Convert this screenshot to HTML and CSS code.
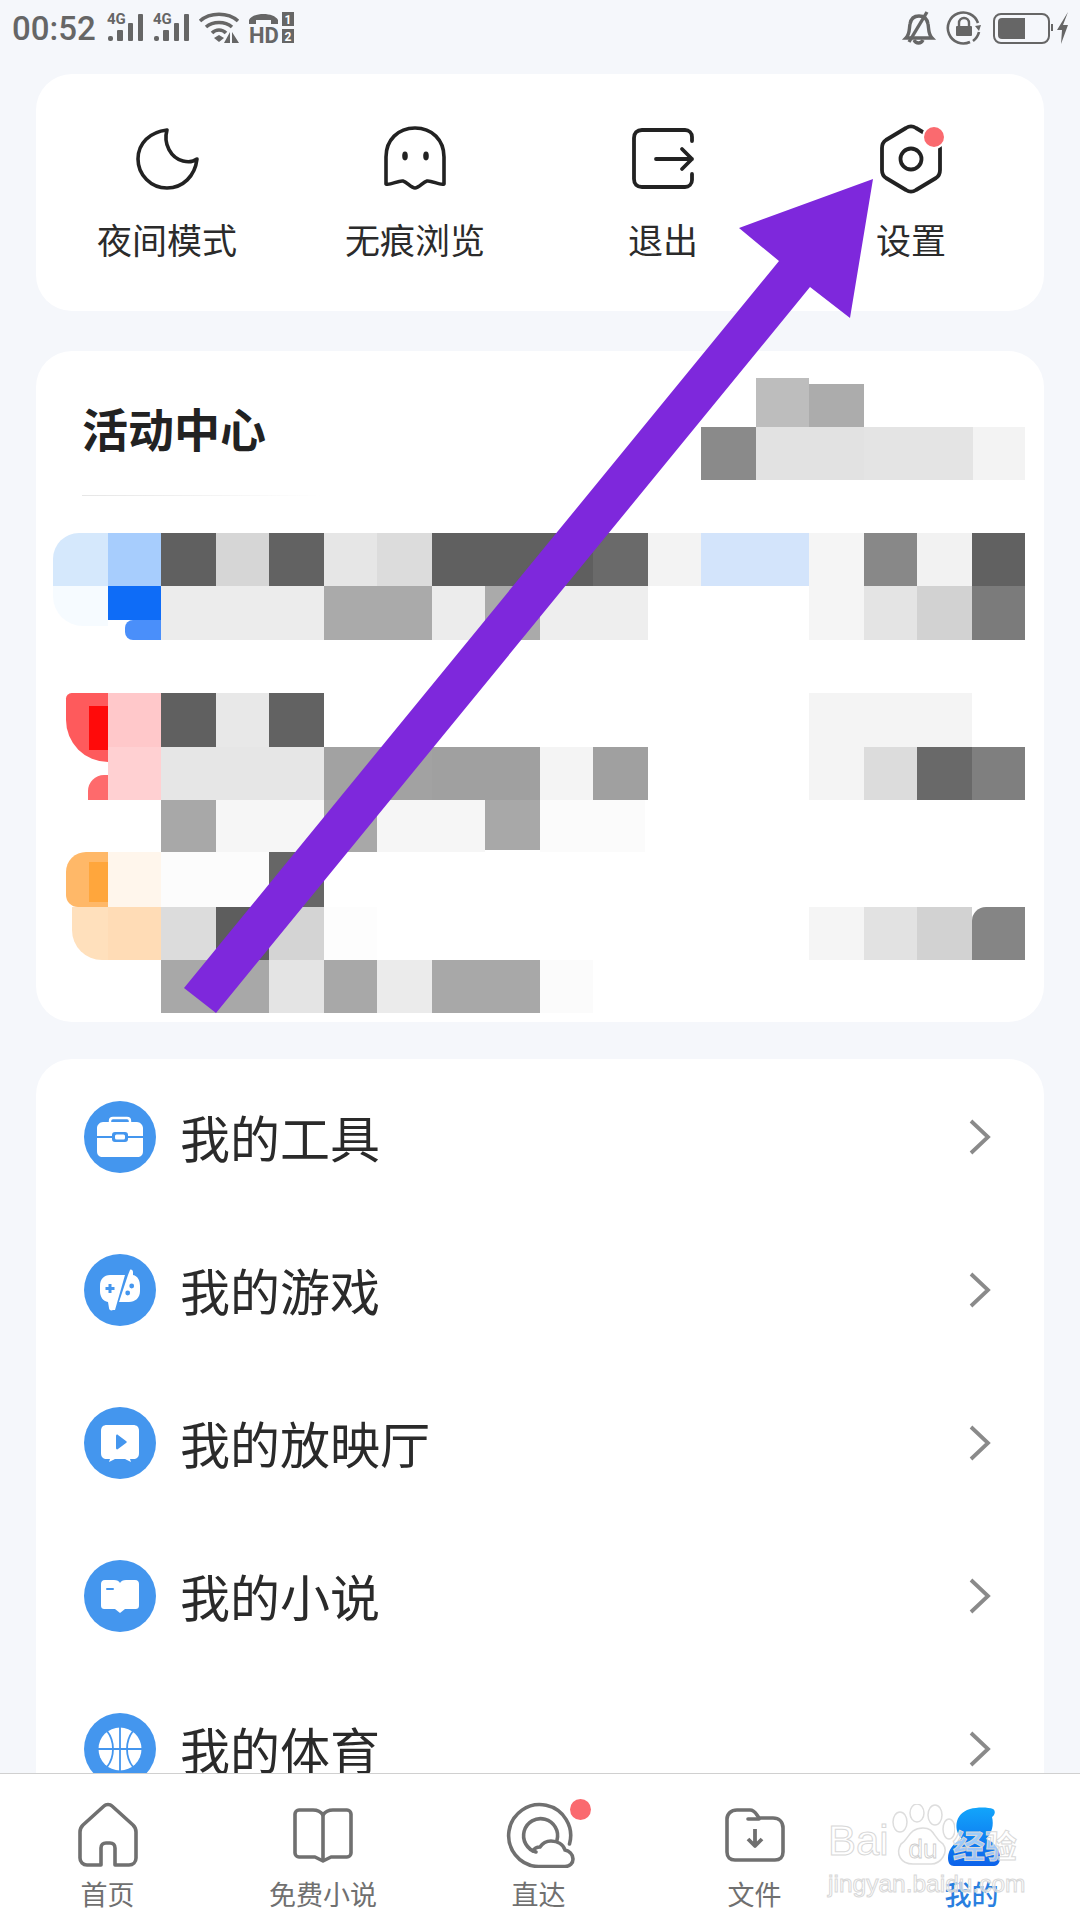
FILE: index.html
```html
<!DOCTYPE html>
<html lang="zh-CN">
<head>
    <meta charset="UTF-8">
    <meta name="viewport" content="width=device-width, initial-scale=1.0">
    <title>我的</title>
    <link rel="stylesheet" href="styles.css">
</head>
<body>
    <div class="screen">
        <!-- status bar -->
        <div class="status">
            <div class="status-left">
                <span class="time">00:52</span>
                <svg width="37" height="30" viewBox="0 0 37 30"><text x="0" y="11" class="sig-label">4G</text><g fill="#666"><rect x="1" y="23" width="5" height="5" rx="2"/><rect x="10" y="17" width="6" height="11" rx="1"/><rect x="21" y="10" width="5" height="18" rx="1"/><rect x="31" y="1" width="5" height="27" rx="1"/></g></svg>
                <svg width="37" height="30" viewBox="0 0 37 30"><text x="0" y="11" class="sig-label">4G</text><g fill="#666"><rect x="1" y="23" width="5" height="5" rx="2"/><rect x="10" y="17" width="6" height="11" rx="1"/><rect x="21" y="10" width="5" height="18" rx="1"/><rect x="31" y="1" width="5" height="27" rx="1"/></g></svg>
                <svg width="43" height="32" viewBox="0 0 43 32" fill="none" stroke="#666" stroke-width="3.6"><path d="M1 9C11 0 29 0 39 9"/><path d="M7 15C14 9 26 9 33 15"/><path d="M13 21C17 17 23 17 27 21"/><path d="M15 26l5-3 5 3-5 4z" fill="#666" stroke="none"/><path d="M31 20v11h-6zM33 20v11h7z" fill="#666" stroke="none"/></svg>
                <svg class="hd" width="46" height="32" viewBox="0 0 46 32"><path d="M0 12V8C4 0 25 0 29 8v4h-7V8H7v4z" fill="#666"/><text x="0" y="31" class="hd-label">HD</text><rect x="33" y="0" width="12" height="14" fill="#666"/><rect x="33" y="17" width="12" height="14" fill="#666"/><text x="39" y="11.5" class="sim-label">1</text><text x="39" y="28.5" class="sim-label">2</text></svg>
            </div>
            <div class="status-right">
                <svg width="32" height="34" viewBox="0 0 32 34" fill="none" stroke="#666" stroke-width="3.4"><path d="M3 27c4-4 3-9 4-14 1-6 5-8 9-8s8 2 9 8c1 5 0 10 4 14z"/><path d="M11 29c2 4 7 4 9 0"/><path d="M6 31L24 1"/></svg>
                <svg width="34" height="34" viewBox="0 0 34 34" fill="none" stroke="#666" stroke-width="2.6"><path d="M31 12A15.5 15.5 0 1 0 23 31"/><path d="M32 21a16 16 0 0 1-6 9"/><path d="M28 15l4 5 2-6z" fill="#666" stroke="none"/><path d="M12 15v-3a5 5 0 0 1 10 0v3" stroke-width="2.4"/><rect x="9" y="15" width="16" height="10" rx="1" fill="#666" stroke="none"/></svg>
                <div class="battery"><div class="battery-fill"></div></div>
                <svg width="17" height="32" viewBox="0 0 17 32"><rect x="0" y="12" width="2" height="7" fill="#666"/><path d="M17 0L6 18h5l-1 14 7-19h-5z" fill="#666"/></svg>
            </div>
        </div>

        <!-- quick actions -->
        <div class="card quick">
            <div class="quick-item">
                <svg width="64" height="64" viewBox="0 0 64 64" fill="none" stroke="#222" stroke-width="3.6" stroke-linejoin="round"><path d="M32 4C15 6 3 17 3 33c0 16 13 29 29 29 16 0 28-12 30-29-4 3-10 3-14 2C36 32 28 18 32 4z"/></svg>
                <span>夜间模式</span>
            </div>
            <div class="quick-item">
                <svg width="64" height="64" viewBox="0 0 64 64" fill="none" stroke="#222" stroke-width="3.6" stroke-linejoin="round"><path d="M3 58V31C3 14 15 2 32 2s29 12 29 29v27c-3 2-13-4-17-3-4 1-8 7-12 7s-8-6-12-7c-4-1-14 5-17 3z"/><ellipse cx="22" cy="30" rx="2.8" ry="4.4" fill="#222" stroke="none"/><ellipse cx="43" cy="30" rx="2.8" ry="4.4" fill="#222" stroke="none"/></svg>
                <span>无痕浏览</span>
            </div>
            <div class="quick-item">
                <svg width="64" height="64" viewBox="0 0 64 64" fill="none" stroke="#222" stroke-width="3.8" stroke-linecap="round" stroke-linejoin="round"><path d="M61 15V11C61 7 58 4 54 4H11C6 4 3 7 3 12v41c0 5 3 8 8 8h43c4 0 7-3 7-7v-6"/><path d="M25 33h36M51 23l10 10-10 10"/></svg>
                <span>退出</span>
            </div>
            <div class="quick-item">
                <svg class="gear" width="64" height="70" viewBox="0 0 64 70" fill="none" stroke="#222" stroke-width="3.8" stroke-linejoin="round"><path d="M27 4C30 2 34 2 37 4l20 12c3 2 4 4 4 8v22c0 4-1 6-4 8L37 66c-3 2-7 2-10 0L7 54c-3-2-4-4-4-8V24c0-4 1-6 4-8z"/><circle cx="32" cy="35" r="10.5"/></svg>
                <i class="dot gear-dot"></i>
                <span>设置</span>
            </div>
        </div>

        <!-- activity center, the source is mosaicked here -->
        <div class="card activity">
            <h2>活动中心</h2>
            <div class="hairline"></div>
            <div class="mosaic" id="mosaic"></div>
        </div>

        <!-- list -->
        <div class="card list">
            <div class="row">
                <span class="round"><svg width="46" height="46" viewBox="0 0 46 46"><path d="M13 9V7c0-2 1-3 3-3h14c2 0 3 1 3 3v2" fill="none" stroke="#fff" stroke-width="2.4"/><path d="M6 8h34c3 0 6 3 6 6v8H31v-1c0-2-1-3-3-3H18c-2 0-3 1-3 3v1H0v-8c0-3 3-6 6-6zM0 24h15v1c0 2 1 3 3 3h10c2 0 3-1 3-3v-1h15v13c0 4-2 6-6 6H6c-4 0-6-2-6-6z" fill="#fff"/><rect x="18" y="20.5" width="10" height="5" rx="1.5" fill="#fff"/></svg></span>
                <span class="row-text">我的工具</span>
                <svg class="chev" width="24" height="36" viewBox="0 0 24 36" fill="none" stroke="#8a8a8a" stroke-width="3.8"><path d="M3 2l17 16L3 34"/></svg>
            </div>
            <div class="row">
                <span class="round"><svg width="46" height="46" viewBox="0 0 46 46"><path d="M28 8H13C7 8 3 12 3 19v5c0 6 3 10 8 11l1 6c0 2 2 3 4 2h2z" fill="#fff"/><path d="M31 8l2-5c1-1 3 0 3 2v3c5 1 7 6 7 11v5c0 7-5 11-11 11H22z" fill="#fff"/><path d="M11.5 17v3h-3v3h3v3h3v-3h3v-3h-3v-3z" fill="#4496ee"/><circle cx="34.700" cy="19" r="2.4" fill="#4496ee"/><circle cx="30.700" cy="26" r="2.4" fill="#4496ee"/></svg></span>
                <span class="row-text">我的游戏</span>
                <svg class="chev" width="24" height="36" viewBox="0 0 24 36" fill="none" stroke="#8a8a8a" stroke-width="3.8"><path d="M3 2l17 16L3 34"/></svg>
            </div>
            <div class="row">
                <span class="round"><svg width="46" height="46" viewBox="0 0 46 46"><path d="M10 5H36C40 5 42 7 42 11V33C42 37 40 39 36 39H33L34 42 28 39H18L12 42 13 39H10C6 39 4 37 4 33V11C4 7 6 5 10 5z" fill="#fff"/><path d="M19 16c0-1 1-2 2-1l8 6c1 .7 1 1.500 0 2l-8 6c-1 1-2 0-2-1z" fill="#4496ee"/></svg></span>
                <span class="row-text">我的放映厅</span>
                <svg class="chev" width="24" height="36" viewBox="0 0 24 36" fill="none" stroke="#8a8a8a" stroke-width="3.8"><path d="M3 2l17 16L3 34"/></svg>
            </div>
            <div class="row">
                <span class="round"><svg width="46" height="46" viewBox="0 0 46 46"><path d="M8 7H17C20 7 22 8 23 10 24 8 26 7 29 7H38C41 7 42 9 42 11V32C42 35 41 36 38 36H28L23 40 18 36H8C5 36 4 35 4 32V11C4 9 5 7 8 7z" fill="#fff"/><rect x="9" y="15" width="8" height="2" rx="1" fill="#4496ee"/></svg></span>
                <span class="row-text">我的小说</span>
                <svg class="chev" width="24" height="36" viewBox="0 0 24 36" fill="none" stroke="#8a8a8a" stroke-width="3.8"><path d="M3 2l17 16L3 34"/></svg>
            </div>
            <div class="row">
                <span class="round"><svg width="46" height="46" viewBox="0 0 46 46"><circle cx="23" cy="23" r="21.500" fill="#fff"/><g fill="none" stroke="#4496ee" stroke-width="1.800"><path d="M23 1v44M1 23h44"/><path d="M10 5c8 10 8 26 0 36M36 5c-8 10-8 26 0 36"/></g></svg></span>
                <span class="row-text">我的体育</span>
                <svg class="chev" width="24" height="36" viewBox="0 0 24 36" fill="none" stroke="#8a8a8a" stroke-width="3.8"><path d="M3 2l17 16L3 34"/></svg>
            </div>
        </div>

        <!-- bottom tabs -->
        <div class="tabs">
            <div class="tab">
                <svg width="60" height="66" viewBox="0 0 60 66" fill="none" stroke="#707070" stroke-width="3.6" stroke-linejoin="round"><path d="M26 4c2-2 6-2 8 0l21 19c2 2 3 4 3 7v26c0 4-3 7-7 7H37V46c0-3-2-5-5-5h-4c-3 0-5 2-5 5v17H9c-4 0-7-3-7-7V30c0-3 1-5 3-7z"/></svg>
                <span>首页</span>
            </div>
            <div class="tab">
                <svg width="60" height="66" viewBox="0 0 60 66" fill="none" stroke="#707070" stroke-width="3.6" stroke-linejoin="round"><path d="M6 8h14c4 0 8 2 10 5 2-3 6-5 10-5h14c2 0 4 2 4 4v39c0 2-2 4-4 4H38l-8 4-8-4H6c-2 0-4-2-4-4V12c0-2 2-4 4-4z"/><path d="M30 13v44"/></svg>
                <span>免费小说</span>
            </div>
            <div class="tab">
                <svg width="72" height="66" viewBox="0 0 72 66" fill="none" stroke="#707070" stroke-width="3.6" stroke-linecap="round"><path d="M34 64.500A31 31 0 1 1 66.500 42"/><path d="M34 64.500H62C67 64.500 70 61 70 57 70 52 66 49 62 48 60 42 54 39 48 39 43 39 39 42 37 45 34 45 31 47 30 49"/><path d="M33 50A17 17 0 1 1 54 38"/></svg>
                <i class="dot tab-dot"></i>
                <span>直达</span>
            </div>
            <div class="tab">
                <svg width="60" height="66" viewBox="0 0 60 66" fill="none" stroke="#707070" stroke-width="3.6" stroke-linejoin="round"><path d="M12 8h13c3 0 5 2 7 5l2 3h14c6 0 10 4 10 10v24c0 5-3 8-8 8H10c-5 0-8-3-8-8V17c0-5 4-9 10-9z"/><path d="M23 17h11" stroke-linecap="round"/><path d="M30 27v17M23 37l7 7 7-7" stroke-width="3.800"/></svg>
                <span>文件</span>
            </div>
            <div class="tab tab-on">
                <svg width="60" height="66" viewBox="0 0 60 66"><defs><linearGradient id="me" x1="0" y1="0" x2="0" y2="1"><stop offset="0" stop-color="#12a5fb"/><stop offset="1" stop-color="#0d62ea"/></linearGradient></defs><path d="M28 7c7-2 18-2 23 0 3 2 2 6-1 8 2 8 0 16-6 22 9 3 14 11 14 19 0 4-2 8-6 8H12c-4 0-6-3-6-8 0-8 6-16 14-19-8-7-9-25 8-30z" fill="url(#me)"/></svg>
                <span>我的</span>
            </div>
        </div>

        <!-- watermark -->
        <div class="mark">
            <div class="mark-logo">
                <span>Bai</span>
                <svg class="paw" width="64" height="62" viewBox="0 0 64 62"><g fill="rgba(255,255,255,0.6)" stroke="#ddd" stroke-width="1.500"><ellipse cx="9" cy="18" rx="7" ry="10"/><ellipse cx="26" cy="9" rx="7" ry="9"/><ellipse cx="44" cy="11" rx="7" ry="10"/><ellipse cx="58" cy="25" rx="6" ry="10"/><path d="M32 24c12 0 10 10 20 16 6 8-2 20-12 20H22C10 60 4 50 10 40c8-5 8-16 22-16z"/></g><text x="32" y="54" class="mark-du">du</text></svg>
                <span class="mark-cn">经验</span>
            </div>
            <div class="mark-url">jingyan.baidu.com</div>
        </div>

        <!-- annotation arrow -->
        <svg class="arrow" width="1080" height="1920" viewBox="0 0 1080 1920"><path d="M873 179L739 228 779 261 184 988 216 1013 810 287 850 318z" fill="#7e28dc"/></svg>
    </div>

    <script>
        // mosaic cells: x, y, w, h, colour, radius (optional), as read from the picture
        const cells = [
            [756,378,53,49,"#bdbdbd"],[809,384,55,43,"#acacac"],[701,427,55,53,"#8a8a8a"],[756,427,108,53,"#e2e2e2"],[864,427,109,53,"#e4e4e4"],[973,427,52,53,"#f3f3f3"],
            [53,533,55,53,"#d5e8fc","26px 0 0 0"],[108,533,53,53,"#a7cdfd"],[161,533,55,53,"#606060"],[216,533,53,53,"#d6d6d6"],[269,533,55,53,"#626262"],[324,533,53,53,"#e6e6e6"],[377,533,55,53,"#dcdcdc"],[432,533,108,53,"#606060"],[540,533,53,53,"#5f5f5f"],[593,533,55,53,"#6a6a6a"],[648,533,53,53,"#f3f3f3"],[701,533,108,53,"#d3e4fb"],[809,533,55,53,"#f5f5f5"],[864,533,53,53,"#888"],[917,533,55,53,"#f2f2f2"],[972,533,53,53,"#616161"],
            [53,586,55,40,"#f6fbff","0 0 0 30px"],[108,586,53,34,"#0e6cf7"],[125,620,36,20,"#4a8ffa","8px 0 0 8px"],[161,586,163,54,"#ececec"],[324,586,108,54,"#aaa"],[432,586,53,54,"#ececec"],[485,586,55,54,"#aaa"],[540,586,108,54,"#eee"],[809,586,55,54,"#f5f5f5"],[864,586,53,54,"#e4e4e4"],[917,586,55,54,"#d2d2d2"],[972,586,53,54,"#7b7b7b"],
            [66,693,42,69,"#fe5a5c","8px 0 0 60px"],[89,706,19,44,"#ff0a0a"],[108,693,53,54,"#ffc8ca"],[161,693,55,54,"#606060"],[216,693,53,54,"#e8e8e8"],[269,693,55,54,"#626262"],[809,693,163,54,"#f4f4f4"],
            [88,775,20,25,"#fe6a6c","16px 0 0 0"],[108,747,53,53,"#ffd0d2"],[161,747,163,53,"#e6e6e6"],[324,747,108,53,"#a2a2a2"],[432,747,108,53,"#a0a0a0"],[540,747,53,53,"#f4f4f4"],[593,747,55,53,"#a0a0a0"],[809,747,55,53,"#f4f4f4"],[864,747,53,53,"#dcdcdc"],[917,747,55,53,"#696969"],[972,747,53,53,"#7f7f7f"],
            [161,800,55,52,"#a8a8a8"],[216,800,108,52,"#f6f6f6"],[324,800,53,52,"#a8a8a8"],[377,800,108,52,"#f6f6f6"],[485,800,55,50,"#a8a8a8"],[540,800,105,52,"#fbfbfb"],
            [66,852,42,55,"#ffb868","20px 0 0 12px"],[89,862,19,40,"#ffa63c"],[108,852,53,55,"#fff6ec"],[161,852,108,55,"#fcfcfc"],[269,852,55,55,"#666"],
            [72,907,36,53,"#ffe0bc","0 0 0 30px"],[108,907,53,53,"#ffdcb6"],[161,907,55,53,"#dcdcdc"],[216,907,53,53,"#5d5d5d"],[269,907,55,53,"#d4d4d4"],[324,907,53,53,"#fdfdfd"],[809,907,55,53,"#f5f5f5"],[864,907,53,53,"#e2e2e2"],[917,907,55,53,"#d2d2d2"],[972,907,53,53,"#858585","14px 0 0 0"],
            [161,960,108,53,"#a8a8a8"],[269,960,55,53,"#e4e4e4"],[324,960,53,53,"#a8a8a8"],[377,960,55,53,"#ebebeb"],[432,960,108,53,"#a8a8a8"],[540,960,53,53,"#fbfbfb"]
        ];
        const box = document.getElementById("mosaic");
        cells.forEach(function (c) {
            const el = document.createElement("div");
            el.className = "cell";
            el.style.left = c[0] + "px";
            el.style.top = c[1] + "px";
            el.style.width = c[2] + "px";
            el.style.height = c[3] + "px";
            el.style.background = c[4];
            if (c[5]) el.style.borderRadius = c[5];
            box.appendChild(el);
        });
    </script>
</body>
</html>
```

FILE: styles.css
```css
* {
    box-sizing: border-box;
}
body {
    margin: 0;
    background-color: #f5f7fb;
    font-family: "Noto Sans CJK SC", "Noto Sans", sans-serif;
}
.screen {
    position: relative;
    width: 1080px;
    height: 1920px;
    overflow: hidden;
    padding: 0 36px;
}

/* status bar */
.status {
    height: 74px;
    margin: 0 -36px;
    display: flex;
    justify-content: space-between;
    align-items: flex-start;
    padding: 11px 12px 0 12px;
}
.status svg {
    overflow: visible;
}
.status-left, .status-right {
    display: flex;
    align-items: center;
    height: 34px;
    gap: 9px;
}
.status-right {
    gap: 12px;
}
.time {
    font-family: Roboto, sans-serif;
    font-size: 33px;
    font-weight: 500;
    color: #666;
    width: 86px;
    white-space: nowrap;
}
.hd {
    margin-left: -2px;
}
.sig-label {
    font: 700 15px Roboto, sans-serif;
    fill: #666;
}
.hd-label {
    font: 700 22px Roboto, sans-serif;
    fill: #666;
}
.sim-label {
    font: 700 12px Roboto, sans-serif;
    fill: #fff;
    text-anchor: middle;
}
.battery {
    width: 57px;
    height: 31px;
    border: 2px solid #666;
    border-radius: 8px;
    padding: 3px;
    margin-right: -11px;
}
.battery-fill {
    width: 27px;
    height: 100%;
    background: #666;
    border-radius: 4px 0 0 4px;
}

/* cards */
.card {
    background: #fff;
    border-radius: 36px;
}
.quick {
    height: 237px;
    display: grid;
    grid-template-columns: repeat(4, 248px);
    padding-left: 7px;
}
.quick-item {
    position: relative;
    display: flex;
    flex-direction: column;
    align-items: center;
    padding-top: 52px;
    font-size: 35px;
    color: #2b2b2b;
}
.quick-item svg {
    margin-bottom: 25px;
}
.quick-item .gear {
    margin-top: -2px;
    margin-bottom: 21px;
}
.quick-item span {
    line-height: 48px;
}
.dot {
    position: absolute;
    width: 20px;
    height: 20px;
    border-radius: 50%;
    background: #fa6a6f;
}
.gear-dot {
    top: 53px;
    left: 137px;
    box-shadow: 0 0 0 2px #fff;
}
.activity {
    margin-top: 40px;
    height: 671px;
    padding: 46px 46px 0;
}
.activity h2 {
    margin: 0;
    font-size: 46px;
    font-weight: 700;
    line-height: 60px;
    color: #222;
}
.hairline {
    width: 240px;
    height: 1px;
    margin-top: 38px;
    background: linear-gradient(to right, #e6e6e6, #fff);
}
.mosaic {
    position: absolute;
    top: 0;
    left: 0;
}
.cell {
    position: absolute;
}
.list {
    margin-top: 37px;
    height: 800px;
    padding-top: 1px;
}
.row {
    height: 153px;
    display: flex;
    align-items: center;
    padding: 0 52px 0 48px;
    font-size: 50px;
    color: #2a2a2a;
}
.round {
    width: 72px;
    height: 72px;
    border-radius: 50%;
    background: #4496ee;
    display: flex;
    align-items: center;
    justify-content: center;
    margin-right: 24px;
    flex-shrink: 0;
}
.row-text {
    flex: 1;
    line-height: 70px;
    padding-bottom: 2px;
}

/* bottom tabs */
.tabs {
    position: absolute;
    left: 0;
    right: 0;
    bottom: 0;
    height: 147px;
    background: #fff;
    border-top: 1px solid #d0d0d0;
    display: grid;
    grid-template-columns: 215px 216px 215px 217px 217px;
}
.tab {
    position: relative;
    display: flex;
    flex-direction: column;
    align-items: center;
    padding-top: 28px;
    font-size: 27px;
    color: #707070;
}
.tab span {
    line-height: 40px;
    margin-top: 6px;
}
.tab-on {
    color: #2a7fe0;
    font-weight: 500;
}
.tab-dot {
    top: 25px;
    left: 139px;
    width: 21px;
    height: 21px;
}

/* watermark */
.mark {
    position: absolute;
    left: 828px;
    top: 1804px;
    width: 196px;
    color: rgba(255, 255, 255, 0.6);
    -webkit-text-stroke: 1px #d8d8d8;
    font-family: "Liberation Sans", sans-serif;
}
.mark-logo {
    display: flex;
    align-items: flex-end;
    height: 62px;
    font-size: 42px;
    line-height: 50px;
}
.paw {
    flex-shrink: 0;
    margin-left: 2px;
}
.mark-du {
    font: 400 26px "Liberation Sans", sans-serif;
    fill: #fff;
    text-anchor: middle;
    stroke: #ccc;
    stroke-width: 0.8;
}
.mark-cn {
    font-family: "Noto Sans CJK SC", sans-serif;
    font-size: 32px;
    font-weight: 700;
    line-height: 44px;
    margin-left: -2px;
    white-space: nowrap;
}
.mark-url {
    font-size: 24.5px;
    line-height: 30px;
    margin-top: 3px;
    white-space: nowrap;
}
.arrow {
    position: absolute;
    top: 0;
    left: 0;
}
```
